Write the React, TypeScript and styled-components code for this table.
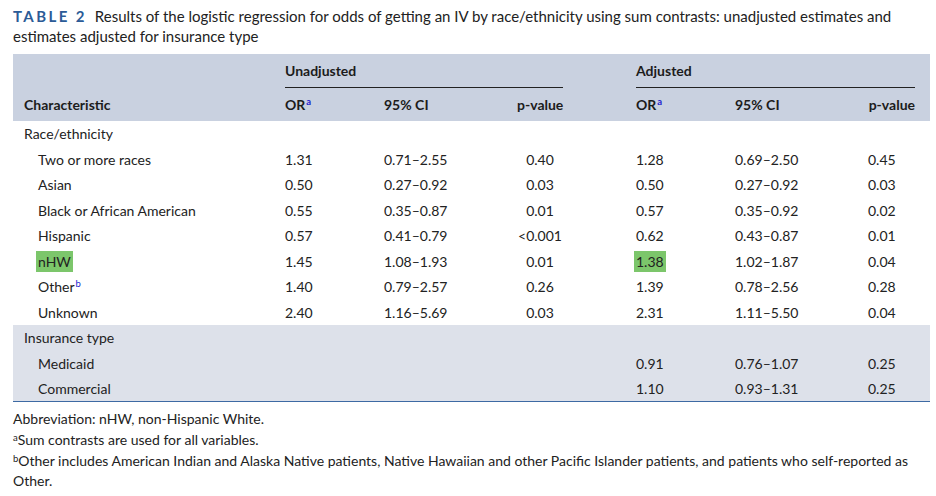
import React from "react";
import styled, { createGlobalStyle } from "styled-components";

type Row = {
  label: string;
  note?: string;
  highlight?: boolean;
  u?: [string, string, string];
  a: [string, string, string];
  aHighlight?: boolean;
};

const raceRows: Row[] = [
  { label: "Two or more races", u: ["1.31", "0.71–2.55", "0.40"], a: ["1.28", "0.69–2.50", "0.45"] },
  { label: "Asian", u: ["0.50", "0.27–0.92", "0.03"], a: ["0.50", "0.27–0.92", "0.03"] },
  { label: "Black or African American", u: ["0.55", "0.35–0.87", "0.01"], a: ["0.57", "0.35–0.92", "0.02"] },
  { label: "Hispanic", u: ["0.57", "0.41–0.79", "<0.001"], a: ["0.62", "0.43–0.87", "0.01"] },
  { label: "nHW", highlight: true, aHighlight: true, u: ["1.45", "1.08–1.93", "0.01"], a: ["1.38", "1.02–1.87", "0.04"] },
  { label: "Other", note: "b", u: ["1.40", "0.79–2.57", "0.26"], a: ["1.39", "0.78–2.56", "0.28"] },
  { label: "Unknown", u: ["2.40", "1.16–5.69", "0.03"], a: ["2.31", "1.11–5.50", "0.04"] },
];

const insuranceRows: Row[] = [
  { label: "Medicaid", a: ["0.91", "0.76–1.07", "0.25"] },
  { label: "Commercial", a: ["1.10", "0.93–1.31", "0.25"] },
];

const GlobalStyle = createGlobalStyle`
  body {
    margin: 0;
    background: #ffffff;
    font-family: Lato, "Open Sans", sans-serif;
    color: #222222;
  }
`;

const Page = styled.div`
  padding: 6px 6px 0 13px;
  width: 917px;
`;

const Caption = styled.div`
  font-size: 15px;
  line-height: 20px;
  color: #222222;
`;

const Label = styled.span`
  color: #2b5b97;
  font-weight: 700;
  letter-spacing: 2.4px;
  margin-right: 8px;
`;

const Table = styled.table`
  margin-top: 8px;
  width: 917px;
  border-collapse: collapse;
  table-layout: fixed;
  font-size: 14px;
  border-bottom: 1px solid #3d6aa3;
`;

const Head = styled.thead`
  background: #c9d1e0;
  color: #1c1c1c;
`;

const Th = styled.th<{ $align?: string; $underline?: boolean }>`
  padding: 0;
  height: 33px;
  font-weight: 700;
  text-align: ${(p) => p.$align ?? "left"};
  vertical-align: middle;
  white-space: nowrap;
  border-bottom: ${(p) => (p.$underline ? "1px solid #222" : "none")};
`;

const FirstCol = styled.th`
  padding: 0 0 0 11px;
  font-weight: 700;
  text-align: left;
`;

const Tr = styled.tr<{ $shaded?: boolean }>`
  height: 25.5px;
  background: ${(p) => (p.$shaded ? "#dde1ea" : "transparent")};
`;

const Td = styled.td<{ $align?: string; $indent?: number }>`
  padding: 0 0 0 ${(p) => p.$indent ?? 0}px;
  text-align: ${(p) => p.$align ?? "left"};
  vertical-align: middle;
  white-space: nowrap;
  color: #222;
`;

const Mark = styled.span`
  background: #7cc66b;
  padding: 2px 2px;
  margin-left: -2px;
`;

const Sup = styled.sup`
  color: #2323d0;
  font-size: 9.5px;
  line-height: 1;
  vertical-align: 5px;
  margin-left: 1px;
`;

const Notes = styled.div`
  margin-top: 7px;
  font-size: 14px;
  line-height: 20px;
  display: flex;
  flex-direction: column;
  gap: 1px;
`;

const NoteSup = styled.sup`
  font-size: 9.5px;
  line-height: 1;
  vertical-align: 4px;
`;

const DataRow: React.FC<{ row: Row; shaded?: boolean }> = ({ row, shaded }) => (
  <Tr $shaded={shaded}>
    <Td $indent={25}>
      {row.highlight ? <Mark>{row.label}</Mark> : row.label}
      {row.note && <Sup>{row.note}</Sup>}
    </Td>
    <Td>{row.u?.[0]}</Td>
    <Td>{row.u?.[1]}</Td>
    <Td $align="center">{row.u?.[2]}</Td>
    <Td />
    <Td>{row.aHighlight ? <Mark>{row.a[0]}</Mark> : row.a[0]}</Td>
    <Td>{row.a[1]}</Td>
    <Td>{row.a[2]}</Td>
    <Td />
  </Tr>
);

const App: React.FC = () => {
  return (
    <Page>
      <GlobalStyle />
      <Caption>
        <Label>TABLE 2</Label>
        Results of the logistic regression for odds of getting an IV by race/ethnicity using sum contrasts: unadjusted estimates and
        estimates adjusted for insurance type
      </Caption>
      <Table>
        <colgroup>
          <col style={{ width: 272 }} />
          <col style={{ width: 99 }} />
          <col style={{ width: 133 }} />
          <col style={{ width: 46 }} />
          <col style={{ width: 73 }} />
          <col style={{ width: 99 }} />
          <col style={{ width: 133 }} />
          <col style={{ width: 47 }} />
          <col style={{ width: 15 }} />
        </colgroup>
        <Head>
          <tr>
            <Th />
            <Th colSpan={3} $underline>
              Unadjusted
            </Th>
            <Th />
            <Th colSpan={3} $underline>
              Adjusted
            </Th>
            <Th />
          </tr>
          <tr>
            <FirstCol>Characteristic</FirstCol>
            <Th>
              OR<Sup>a</Sup>
            </Th>
            <Th>95% CI</Th>
            <Th $align="right">p-value</Th>
            <Th />
            <Th>
              OR<Sup>a</Sup>
            </Th>
            <Th>95% CI</Th>
            <Th $align="right">p-value</Th>
            <Th />
          </tr>
        </Head>
        <tbody>
          <Tr>
            <Td $indent={11} colSpan={9}>
              Race/ethnicity
            </Td>
          </Tr>
          {raceRows.map((r) => (
            <DataRow key={r.label} row={r} />
          ))}
          <Tr $shaded>
            <Td $indent={11} colSpan={9}>
              Insurance type
            </Td>
          </Tr>
          {insuranceRows.map((r) => (
            <DataRow key={r.label} row={r} shaded />
          ))}
        </tbody>
      </Table>
      <Notes>
        <div>Abbreviation: nHW, non-Hispanic White.</div>
        <div>
          <NoteSup>a</NoteSup>Sum contrasts are used for all variables.
        </div>
        <div>
          <NoteSup>b</NoteSup>Other includes American Indian and Alaska Native patients, Native Hawaiian and other Pacific Islander
          patients, and patients who self-reported as Other.
        </div>
      </Notes>
    </Page>
  );
};

export default App;
